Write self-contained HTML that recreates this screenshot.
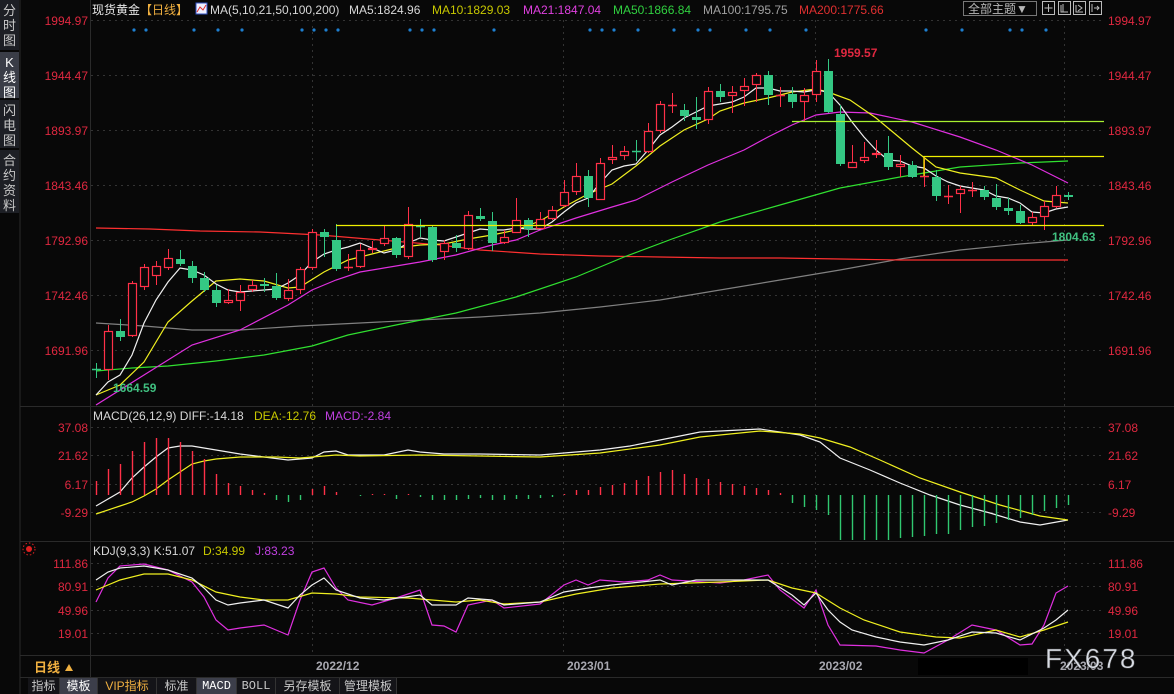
<!DOCTYPE html>
<html><head><meta charset="utf-8"><style>
html,body{margin:0;padding:0;background:#080808;width:1174px;height:694px;overflow:hidden;font-family:"Liberation Sans","Noto Sans CJK SC",sans-serif}
#wrap{position:relative;width:1174px;height:694px}
svg{position:absolute;left:0;top:0}
.sb{position:absolute;left:0;width:19px;background:#1d1f25;color:#c8c8c8;font-size:13px;line-height:15px;text-align:center;padding-top:3px;box-sizing:border-box}
.tab{position:absolute;top:678px;height:16px;line-height:16px;font-size:12px;color:#c8c8c8;text-align:center;background:#141418;border-right:1px solid #333}
</style></head><body><div id="wrap">
<svg id="s" width="1174" height="694" font-family="Liberation Sans, Noto Sans CJK SC, sans-serif">
<g stroke="#2a2a2a" stroke-width="1">
<line x1="20" y1="0" x2="20" y2="694"/>
<line x1="90.5" y1="0" x2="90.5" y2="677"/>
<line x1="20" y1="406.5" x2="1174" y2="406.5"/>
<line x1="20" y1="541.5" x2="1174" y2="541.5"/>
<line x1="20" y1="655.5" x2="1174" y2="655.5"/>
<line x1="20" y1="677.5" x2="1174" y2="677.5"/>
</g>
<g stroke="#333" stroke-dasharray="2,4" stroke-width="1">
<line x1="91" y1="20.5" x2="1104" y2="20.5"/><line x1="91" y1="75.5" x2="1104" y2="75.5"/><line x1="91" y1="130.5" x2="1104" y2="130.5"/><line x1="91" y1="185.5" x2="1104" y2="185.5"/><line x1="91" y1="240.5" x2="1104" y2="240.5"/><line x1="91" y1="295.5" x2="1104" y2="295.5"/><line x1="91" y1="350.5" x2="1104" y2="350.5"/>
<line x1="91" y1="427.5" x2="1104" y2="427.5"/><line x1="91" y1="455.5" x2="1104" y2="455.5"/><line x1="91" y1="484.5" x2="1104" y2="484.5"/><line x1="91" y1="512.5" x2="1104" y2="512.5"/>
<line x1="91" y1="563.5" x2="1104" y2="563.5"/><line x1="91" y1="586.5" x2="1104" y2="586.5"/><line x1="91" y1="610.5" x2="1104" y2="610.5"/><line x1="91" y1="633.5" x2="1104" y2="633.5"/>
<line x1="312.5" y1="20" x2="312.5" y2="655"/><line x1="563.5" y1="20" x2="563.5" y2="655"/><line x1="815.5" y1="20" x2="815.5" y2="655"/><line x1="1064.5" y1="20" x2="1064.5" y2="655"/>
</g>
<g id="dots" fill="#1e7fd0"></g>
<g id="lines" fill="none" stroke-width="1.2"></g>
<g id="candles"></g>
<g id="hist" stroke-width="1.4"></g>
<line x1="336" y1="225.5" x2="1104" y2="225.5" stroke="#f0f000" stroke-width="1.3"/>
<line x1="792" y1="121.5" x2="1104" y2="121.5" stroke="#a8f030" stroke-width="1.3"/>
<polyline points="924,176 924,156.5 1104,156.5" fill="none" stroke="#f0f000" stroke-width="1.3"/>
<g font-size="12" fill="#e02840">
<text x="88" y="25" text-anchor="end">1994.97</text><text x="88" y="80" text-anchor="end">1944.47</text><text x="88" y="135" text-anchor="end">1893.97</text><text x="88" y="190" text-anchor="end">1843.46</text><text x="88" y="245" text-anchor="end">1792.96</text><text x="88" y="300" text-anchor="end">1742.46</text><text x="88" y="355" text-anchor="end">1691.96</text>
<text x="88" y="432" text-anchor="end">37.08</text><text x="88" y="460" text-anchor="end">21.62</text><text x="88" y="489" text-anchor="end">6.17</text><text x="88" y="517" text-anchor="end">-9.29</text>
<text x="88" y="568" text-anchor="end">111.86</text><text x="88" y="591" text-anchor="end">80.91</text><text x="88" y="615" text-anchor="end">49.96</text><text x="88" y="638" text-anchor="end">19.01</text>
<text x="1108" y="25">1994.97</text><text x="1108" y="80">1944.47</text><text x="1108" y="135">1893.97</text><text x="1108" y="190">1843.46</text><text x="1108" y="245">1792.96</text><text x="1108" y="300">1742.46</text><text x="1108" y="355">1691.96</text>
<text x="1108" y="432">37.08</text><text x="1108" y="460">21.62</text><text x="1108" y="489">6.17</text><text x="1108" y="517">-9.29</text>
<text x="1108" y="568">111.86</text><text x="1108" y="591">80.91</text><text x="1108" y="615">49.96</text><text x="1108" y="638">19.01</text>
<text x="834" y="57" font-weight="bold">1959.57</text>
</g>
<text x="1052" y="241" font-size="12" font-weight="bold" fill="#40c080">1804.63</text>
<text x="113" y="392" font-size="12" font-weight="bold" fill="#40c080">1664.59</text>
<g font-size="12">
<text x="92" y="14" fill="#e8e8e8">现货黄金</text><text x="140" y="14" fill="#f0b040">【日线】</text>
<rect x="196" y="3" width="11" height="11" fill="#f0f0ff" stroke="#3050c0"/><polyline points="197,12 200,7 203,10 206,5" stroke="#e03030" fill="none"/>
<text x="210" y="14" fill="#d8d8d8">MA(5,10,21,50,100,200)</text>
<text x="349" y="14" fill="#d8d8d8">MA5:1824.96</text>
<text x="432" y="14" fill="#c8c800">MA10:1829.03</text>
<text x="523" y="14" fill="#e040e0">MA21:1847.04</text>
<text x="613" y="14" fill="#30d040">MA50:1866.84</text>
<text x="703" y="14" fill="#a0a0a0">MA100:1795.75</text>
<text x="799" y="14" fill="#e03030">MA200:1775.66</text>
<text x="93" y="420" fill="#d8d8d8">MACD(26,12,9) DIFF:-14.18</text>
<text x="254" y="420" fill="#c8c800">DEA:-12.76</text>
<text x="325" y="420" fill="#c040e0">MACD:-2.84</text>
<text x="93" y="555" fill="#d8d8d8">KDJ(9,3,3) K:51.07</text>
<text x="203" y="555" fill="#c8c800">D:34.99</text>
<text x="255" y="555" fill="#c040e0">J:83.23</text>
<text x="316" y="670" fill="#a8a8b0" font-weight="bold">2022/12</text>
<text x="567" y="670" fill="#a8a8b0" font-weight="bold">2023/01</text>
<text x="819" y="670" fill="#a8a8b0" font-weight="bold">2023/02</text>
<text x="1060" y="670" fill="#a8a8b0" font-weight="bold">2023/03</text>
<text x="34" y="672" fill="#f0b040" font-size="13" font-weight="bold">日线</text>
</g>
<polygon points="65,671 69,664 73,671" fill="#f0b040"/>
<circle cx="29" cy="549" r="3" fill="#e02020"/><circle cx="29" cy="549" r="6" fill="none" stroke="#e02020" stroke-dasharray="1.5,2"/>
<rect x="918" y="658" width="110" height="17" fill="#000"/>
<text x="1045" y="668" font-size="28" fill="#d8dce4" stroke="#404040" stroke-width="0.5" letter-spacing="2">FX678</text>
<rect x="963.5" y="1.5" width="73" height="14" fill="none" stroke="#777"/>
<text x="968" y="13" font-size="12" fill="#b8b8b8">全部主题▼</text>
<g fill="none" stroke="#bbb"><rect x="1042.5" y="1.5" width="12" height="13"/><rect x="1058.5" y="1.5" width="12" height="13"/><rect x="1073.5" y="1.5" width="12" height="13"/><rect x="1089.5" y="1.5" width="12" height="13"/>
<path d="M1048.5 4v8M1044.5 8h8M1061 5v7h7M1063 4v8M1076 5v7h7M1078 5l4 3-4 3M1092 4v8M1094 8h5M1097 6l2 2-2 2"/></g>
</svg>
<div class="sb" style="top:0;height:50px">分<br>时<br>图</div>
<div class="sb" style="top:52px;height:46px;background:#3a3d47;color:#fff">K<br>线<br>图</div>
<div class="sb" style="top:100px;height:48px">闪<br>电<br>图</div>
<div class="sb" style="top:150px;height:63px">合<br>约<br>资<br>料</div>
<div class="tab" style="left:28px;width:31px">指标</div>
<div class="tab" style="left:60px;width:37px;background:#3c3e4a;color:#fff">模板</div>
<div class="tab" style="left:98px;width:58px;color:#f0b040">VIP指标</div>
<div class="tab" style="left:157px;width:39px">标准</div>
<div class="tab" style="left:197px;width:39px;background:#3c3e4a;color:#fff;font-family:'Liberation Mono',monospace">MACD</div>
<div class="tab" style="left:237px;width:38px;font-family:'Liberation Mono',monospace">BOLL</div>
<div class="tab" style="left:276px;width:63px">另存模板</div>
<div class="tab" style="left:340px;width:56px">管理模板</div>
</div>
<script>
var NS="http://www.w3.org/2000/svg";
function el(p,t,a){var e=document.createElementNS(NS,t);for(var k in a)e.setAttribute(k,a[k]);p.appendChild(e);return e;}
var C=[[369,369,363,378],[370,331,325,380],[331,337,319,341],[336,283,281,337],[287,267,264,290],[276,266,261,285],[268,258,249,270],[259,264,250,266],[266,278,261,283],[278,290,272,292],[290,303,285,307],[303,300,289,304],[301,292,285,311],[290,285,280,292],[284,286,278,292],[286,298,273,300],[299,290,279,301],[290,269,267,294],[268,232,229,270],[232,237,229,257],[240,269,224,271],[268,267,254,271],[267,250,244,268],[250,248,241,253],[244,238,226,246],[238,255,237,258],[257,224,207,259],[226,227,219,237],[227,260,225,262],[252,243,240,260],[243,248,235,252],[249,215,211,250],[216,219,208,221],[221,243,212,251],[243,237,230,244],[233,220,198,233],[220,229,218,237],[229,219,212,229],[219,210,206,220],[206,192,180,207],[192,176,163,195],[176,198,170,207],[200,163,158,200],[160,157,145,164],[156,151,146,160],[151,152,140,161],[152,131,123,153],[131,104,101,133],[105,105,93,113],[110,116,104,121],[117,120,97,129],[120,91,87,124],[91,97,84,102],[96,92,86,113],[91,86,78,106],[85,75,73,102],[75,95,71,105],[95,95,87,107],[94,102,87,108],[102,95,88,122],[95,71,60,102],[71,112,59,113],[114,164,105,166],[168,162,145,168],[161,157,142,163],[155,153,140,158],[153,167,136,170],[167,164,155,177],[165,177,161,178],[176,176,156,187],[177,196,170,201],[196,196,185,204],[194,189,186,213],[190,190,182,197],[190,197,186,200],[198,207,184,210],[208,211,198,215],[211,223,205,224],[223,217,212,226],[217,206,201,230],[207,195,186,208],[195,197,192,200]];
var cg=document.getElementById("candles");
C.forEach(function(c,i){var x=96+i*12;var up=c[1]<c[0]||(c[1]==c[0]&&i!=0&&i!=27&&i!=81);var col=up?"#ff3048":"#34c884";
var t=Math.min(c[0],c[1]),b=Math.max(c[0],c[1]);
el(cg,"line",{x1:x+.5,y1:c[2],x2:x+.5,y2:t,stroke:col});el(cg,"line",{x1:x+.5,y1:b,x2:x+.5,y2:c[3],stroke:col});
if(b-t<1.5){el(cg,"line",{x1:x-4,y1:t+.5,x2:x+5,y2:t+.5,stroke:col,"stroke-width":1.5});}
else if(up)el(cg,"rect",{x:x-3.5,y:t+.5,width:8,height:b-t-1,fill:"#080808",stroke:col,"stroke-width":1.2});
else el(cg,"rect",{x:x-4,y:t,width:9,height:b-t,fill:col});});
var L=[
["#808080",[[96,323],[144,326],[192,330],[240,330],[300,326],[360,323],[420,320],[480,317],[540,313],[600,307],[660,300],[720,290],[780,280],[840,270],[900,259],[960,250],[1020,244],[1068,240]]],
["#ff3030",[[96,228],[150,229],[200,231],[260,232],[320,235],[380,240],[440,245],[480,250],[540,254],[600,256],[660,257],[720,258],[780,258],[840,259],[900,260],[1068,260]]],
["#30e030",[[96,371],[132,368],[168,366],[216,361],[264,355],[312,346],[348,335],[396,325],[456,313],[516,297],[576,277],[624,257],[672,239],[720,222],[780,205],[840,188],[900,177],[960,167],[1020,163],[1068,161]]],
["#e030e0",[[96,405],[144,375],[192,345],[240,330],[288,305],[312,290],[336,280],[360,272],[420,262],[456,255],[492,245],[516,240],[540,230],[576,218],[612,207],[636,200],[672,182],[708,165],[744,150],[768,137],[792,125],[816,115],[840,112],[870,113],[912,122],[960,137],[996,150],[1032,165],[1068,183]]],
["#f0f020",[[96,395],[120,385],[144,362],[168,322],[192,301],[216,281],[240,279],[264,281],[288,288],[300,287],[324,272],[348,260],[372,254],[396,248],[420,245],[444,244],[468,239],[492,235],[516,230],[540,221],[564,207],[588,194],[612,184],[636,166],[660,146],[684,130],[708,119],[720,111],[744,103],[768,98],[792,92],[816,89],[828,92],[850,100],[876,118],[912,148],[936,167],[960,173],[996,178],[1020,190],[1044,201],[1068,203]]],
["#f0f0f0",[[96,395],[108,382],[120,375],[132,355],[144,323],[156,300],[168,282],[180,268],[192,270],[204,275],[216,284],[228,290],[240,292],[252,291],[264,290],[276,289],[288,283],[300,275],[312,262],[324,254],[336,250],[348,247],[360,243],[372,248],[384,253],[396,250],[408,243],[420,238],[432,240],[444,241],[456,237],[468,233],[480,229],[492,230],[504,230],[516,228],[528,229],[540,229],[552,222],[564,212],[576,203],[588,198],[600,183],[612,170],[624,166],[636,164],[648,150],[660,135],[672,127],[684,118],[696,112],[708,106],[720,104],[732,102],[744,97],[756,88],[768,88],[780,91],[792,91],[804,92],[816,90],[828,92],[840,105],[852,122],[864,137],[876,150],[888,160],[900,161],[912,166],[924,168],[936,176],[948,182],[960,186],[972,188],[984,190],[996,196],[1008,198],[1020,203],[1032,212],[1044,213],[1056,209],[1068,207]]],
["#f0f0f0",[[96,506],[120,492],[132,478],[144,467],[156,457],[168,448],[180,446],[192,446],[204,448],[216,450],[240,454],[264,457],[288,460],[312,458],[324,452],[336,451],[348,455],[384,455],[408,450],[420,452],[444,454],[480,454],[540,455],[564,453],[600,450],[630,446],[660,440],[700,432],[760,429],[800,435],[820,442],[840,458],[870,470],[900,483],[930,495],[960,505],[990,513],[1020,522],[1040,525],[1068,520]]],
["#f0f020",[[96,514],[120,506],[132,502],[144,496],[156,489],[168,480],[180,472],[192,464],[204,461],[216,459],[240,457],[276,457],[300,458],[336,455],[360,456],[420,455],[480,456],[540,457],[600,453],[660,445],[700,437],[760,431],[800,434],[820,438],[850,447],[880,460],[920,478],[960,492],[1000,505],[1040,516],[1068,520]]],
["#e030e0",[[96,602],[108,578],[120,566],[144,564],[168,570],[192,582],[204,597],[216,620],[228,630],[240,628],[264,625],[288,635],[300,600],[312,572],[324,568],[336,588],[348,600],[372,605],[396,598],[420,590],[432,625],[444,626],[456,632],[468,605],[492,600],[504,608],[540,604],[564,585],[576,580],[588,585],[600,580],[624,582],[648,580],[660,575],[672,580],[720,583],[744,580],[768,575],[780,590],[804,608],[816,590],[828,625],[840,645],[876,646],[900,650],[924,653],[948,640],[972,625],[996,630],[1020,645],[1032,644],[1044,625],[1056,593],[1068,586]]],
["#f0f020",[[96,590],[120,580],[144,574],[168,574],[192,580],[216,592],[240,597],[264,600],[288,600],[312,593],[336,594],[360,597],[408,598],[432,600],[456,602],[480,600],[504,604],[540,602],[576,594],[612,588],[660,584],[720,582],[768,580],[792,588],[816,593],[840,608],[864,620],[900,632],[936,637],[960,638],[996,630],[1020,637],[1044,630],[1068,622]]],
["#f0f0f0",[[96,580],[108,572],[120,568],[144,566],[168,570],[192,578],[204,588],[216,600],[228,605],[240,603],[264,600],[288,608],[300,595],[312,585],[324,578],[336,590],[360,598],[384,600],[420,595],[432,605],[456,605],[468,598],[492,600],[504,605],[540,602],[564,592],[588,588],[612,585],[660,580],[672,585],[696,580],[768,580],[792,595],[804,605],[816,593],[828,610],[840,622],[852,630],[876,637],[900,642],[924,645],[948,640],[972,632],[996,633],[1020,640],[1044,628],[1056,620],[1068,610]]]];
var lg=document.getElementById("lines");
L.forEach(function(l){el(lg,"polyline",{points:l[1].map(function(p){return p.join(",")}).join(" "),stroke:l[0]});});
var H=[481,469,464,451,442,438,438,442,451,459,474,483,486,490,493,500,502,500,489,486,492,495,496,494,494,499,494,497,500,500,500,499,498,500,500,499,499,498,497,494,490,490,487,485,483,480,476,472,470,474,478,479,482,484,486,488,490,493,503,507,510,515,540,540,540,540,540,538,537,536,534,534,530,527,526,523,520,518,515,511,508,505];
var hg=document.getElementById("hist");
H.forEach(function(h,i){var x=96+i*12+.5;el(hg,"line",{x1:x,y1:495,x2:x,y2:h,stroke:h<495?"#ff3048":"#30c870"});});
var D=[134,146,194,218,242,302,314,326,338,410,422,434,494,590,602,614,638,674,698,710,746,770,806,926,962,1010,1022,1046];
var dg=document.getElementById("dots");D.forEach(function(x){el(dg,"circle",{cx:x,cy:30,r:1.6});});
</script>
</body></html>
